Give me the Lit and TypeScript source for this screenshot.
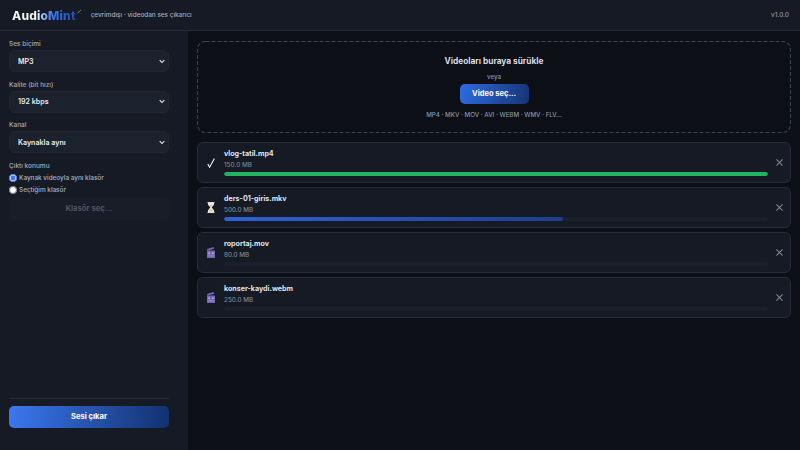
import { LitElement, html, css, svg } from 'lit';
import { customElement } from 'lit/decorators.js';

type Item = { icon: 'done' | 'wait' | 'film'; name: string; size: string; pct: number; color: string };

const items: Item[] = [
  { icon: 'done', name: 'vlog-tatil.mp4', size: '150.0 MB', pct: 100, color: '#22b35e' },
  { icon: 'wait', name: 'ders-01-giris.mkv', size: '500.0 MB', pct: 62.300, color: 'linear-gradient(90deg,#2f62d6,#1d3f8f)' },
  { icon: 'film', name: 'roportaj.mov', size: '80.0 MB', pct: 0, color: '#2f62d6' },
  { icon: 'film', name: 'konser-kaydi.webm', size: '250.0 MB', pct: 0, color: '#2f62d6' },
];

const check = svg`<svg class="glyph" viewBox="0 0 8 10" width="8" height="10">
  <path d="M0.800 6 2.600 9.200 7.400 0.600" stroke="#eef2f7" stroke-width="1.100" fill="none"/>
</svg>`;

const hourglass = svg`<svg class="glyph" viewBox="0 0 8 11" width="8" height="11">
  <path d="M1 1h6v1.800L4.700 5.500 7 8.200V10H1V8.200L3.300 5.500 1 2.800z" fill="#e6e8ee"/>
  <path d="M1.800 9.300 4 6.800l2.200 2.500zM2.300 3h3.400L4 4.900z" fill="#e9b872"/>
  <rect x="0.500" y="0" width="7" height="1.200" fill="#ecd9b8"/>
  <rect x="0.500" y="9.800" width="7" height="1.200" fill="#ecd9b8"/>
</svg>`;

const clapper = svg`<svg class="glyph" viewBox="0 0 8 11" width="8" height="11">
  <rect x="0" y="3.500" width="8" height="7.500" rx="0.500" fill="#7566b4"/>
  <path d="M0 2 6.600 0 7.200 1.700 0.400 3.700z" fill="#7566b4"/>
  <rect x="1.400" y="5.400" width="1.600" height="1.500" fill="#bdb2e2"/>
  <rect x="5" y="5.400" width="1.600" height="1.500" fill="#bdb2e2"/>
  <rect x="1" y="8.400" width="6" height="0.900" fill="#9a8dd0"/>
</svg>`;

@customElement('app-root')
export class AppRoot extends LitElement {
  static styles = css`
    :host {
      display: block;
      width: 800px;
      height: 450px;
      overflow: hidden;
      background: #0c0f15;
      color: #e6edf3;
      font-family: Inter, 'Liberation Sans', sans-serif;
      font-size: 8px;
    }

    .header {
      height: 31px;
      box-sizing: border-box;
      display: flex;
      align-items: center;
      padding: 0 11px 0 12px;
      background: #151a24;
      border-bottom: 1px solid #262c38;
    }

    .logo {
      font-size: 12px;
      font-weight: 800;
      letter-spacing: 0.150px;
      margin-right: 15px;
      position: relative;
    }

    .logo b {
      font-weight: 800;
      color: transparent;
      background: linear-gradient(90deg, #f4f6fa 0%, #f0f4fa 38%, #3b78f0 62%, #1d4aa8 100%);
      -webkit-background-clip: text;
      background-clip: text;
    }

    .logo svg {
      position: absolute;
      right: -6px;
      top: 1px;
    }

    .tagline {
      color: #a3acb9;
      font-size: 6.400px;
      font-weight: 500;
    }

    .version {
      margin-left: auto;
      color: #8b95a5;
      font-size: 6.400px;
      font-weight: 500;
    }

    .body {
      display: flex;
      height: 419px;
    }

    .side {
      width: 188px;
      box-sizing: border-box;
      padding: 8px 19px 22px 9px;
      background: #151a24;
      display: flex;
      flex-direction: column;
    }

    label.cap {
      display: block;
      color: #a3acb9;
      font-size: 6.500px;
      font-weight: 500;
      height: 10px;
      line-height: 10px;
      margin-bottom: 1px;
    }

    select {
      display: block;
      appearance: none;
      width: 160px;
      height: 22px;
      flex: none;
      box-sizing: border-box;
      margin: 0 0 7.500px;
      padding: 0 8px;
      font: 600 7.100px Inter, 'Liberation Sans', sans-serif;
      color: #e6edf3;
      background: #1b212d url("data:image/svg+xml,%3Csvg xmlns='http://www.w3.org/2000/svg' viewBox='0 0 7 5'%3E%3Cpath d='M0.800 0.800 3.500 3.700 6.200 0.800' stroke='%23e6edf3' stroke-width='1.300' fill='none'/%3E%3C/svg%3E") no-repeat right 3px center / 6px 5px;
      border: 1px solid #20262f;
      border-radius: 5px;
    }

    .radio {
      display: flex;
      align-items: center;
      gap: 2px;
      height: 12px;
      color: #aab3c0;
      font-size: 6.400px;
      font-weight: 500;
    }

    .radio input {
      width: 8px;
      height: 8px;
      margin: 0;
      accent-color: #3b78f0;
    }

    .folder {
      margin-top: 2px;
      height: 22px;
      width: 160px;
      flex: none;
      line-height: 22px;
      text-align: center;
      border-radius: 5px;
      background: #181d27;
      color: #4d5563;
      font-size: 7.700px;
      font-weight: 700;
    }

    .grow {
      flex: 1;
    }

    .extract {
      border-top: 1px solid #232a38;
      padding-top: 7px;
    }

    .extract div {
      height: 22px;
      line-height: 22px;
      text-align: center;
      border-radius: 5px;
      background: linear-gradient(100deg, #3b78f0, #12306e);
      color: #fff;
      font-size: 7.600px;
      font-weight: 700;
    }

    .main {
      flex: 1;
      padding: 10px 9px 0 9px;
      display: flex;
      flex-direction: column;
      gap: 4px;
    }

    .drop {
      height: 92px;
      flex: none;
      box-sizing: border-box;
      margin-bottom: 5px;
      position: relative;
      display: flex;
      flex-direction: column;
      align-items: center;
      padding-top: 14px;
    }

    .drop > svg {
      position: absolute;
      inset: 0;
    }

    .drop h2 {
      margin: 0;
      font-size: 8.300px;
      line-height: 12px;
      font-weight: 700;
      color: #d8dee8;
    }

    .drop .or {
      margin-top: 5px;
      color: #8b95a5;
      font-size: 6.200px;
      line-height: 9px;
      font-weight: 500;
    }

    .drop .pick {
      margin-top: 3px;
      width: 69px;
      height: 20px;
      line-height: 20px;
      text-align: center;
      border-radius: 5px;
      background: linear-gradient(100deg, #2f6be0, #153477);
      color: #fff;
      font-size: 7.500px;
      font-weight: 700;
    }

    .drop .fmt {
      margin-top: 6px;
      color: #8a94a4;
      font-size: 6.200px;
      line-height: 9px;
      font-weight: 500;
    }

    .item {
      height: 41px;
      box-sizing: border-box;
      background: #151a24;
      border: 1px solid #262c38;
      border-radius: 6px;
      display: flex;
      align-items: center;
    }

    .ico {
      width: 26px;
      flex: none;
      display: flex;
      justify-content: center;
      padding-right: 1px;
      box-sizing: border-box;
    }

    .info {
      flex: 1;
      min-width: 0;
    }

    .name {
      font-size: 7.100px;
      font-weight: 700;
      line-height: 10px;
      color: #dfe5ee;
    }

    .size {
      font-size: 6.300px;
      line-height: 8px;
      margin-top: 2px;
      color: #7c8696;
      font-weight: 500;
    }

    .track {
      margin-top: 3px;
      height: 4px;
      border-radius: 2px;
      background: #1a202b;
      overflow: hidden;
    }

    .fill {
      height: 100%;
      border-radius: 2px;
    }

    .x {
      width: 22px;
      flex: none;
      display: flex;
      justify-content: center;
    }
  `;

  private renderIcon(icon: Item['icon']) {
    if (icon === 'done') return check;
    return icon === 'wait' ? hourglass : clapper;
  }

  private renderItem(it: Item) {
    return html`
      <div class="item">
        <div class="ico">${this.renderIcon(it.icon)}</div>
        <div class="info">
          <div class="name">${it.name}</div>
          <div class="size">${it.size}</div>
          <div class="track">
            <div class="fill" style="width:${it.pct}%;background:${it.color}"></div>
          </div>
        </div>
        <div class="x">
          <svg viewBox="0 0 8 8" width="7" height="7">
            <path d="M0.500 0.500l7 7M7.500 0.500l-7 7" stroke="#7f8897" stroke-width="1.200" fill="none"/>
          </svg>
        </div>
      </div>
    `;
  }

  render() {
    return html`
      <div class="header">
        <div class="logo"><b>AudioMint</b>
          <svg viewBox="0 0 6 6" width="5" height="5"><path d="M0.500 5 5 1" stroke="#8b95a5" stroke-width="1"/></svg>
        </div>
        <div class="tagline">çevrimdışı · videodan ses çıkarıcı</div>
        <div class="version">v1.0.0</div>
      </div>
      <div class="body">
        <div class="side">
          <label class="cap">Ses biçimi</label>
          <select><option>MP3</option></select>
          <label class="cap">Kalite (bit hızı)</label>
          <select><option>192 kbps</option></select>
          <label class="cap">Kanal</label>
          <select><option>Kaynakla aynı</option></select>
          <label class="cap">Çıktı konumu</label>
          <label class="radio"><input type="radio" name="o" checked />Kaynak videoyla aynı klasör</label>
          <label class="radio"><input type="radio" name="o" />Seçtiğim klasör</label>
          <div class="folder">Klasör seç...</div>
          <div class="grow"></div>
          <div class="extract"><div>Sesi çıkar</div></div>
        </div>
        <div class="main">
          <div class="drop">
            <svg width="594" height="92" viewBox="0 0 594 92">
              <rect x="0.500" y="0.500" width="593" height="91" rx="8" fill="none" stroke="#3a4250" stroke-width="1.100" stroke-dasharray="4 2"/>
            </svg>
            <h2>Videoları buraya sürükle</h2>
            <div class="or">veya</div>
            <div class="pick">Video seç...</div>
            <div class="fmt">MP4 · MKV · MOV · AVI · WEBM · WMV · FLV...</div>
          </div>
          ${items.map((it) => this.renderItem(it))}
        </div>
      </div>
    `;
  }
}
